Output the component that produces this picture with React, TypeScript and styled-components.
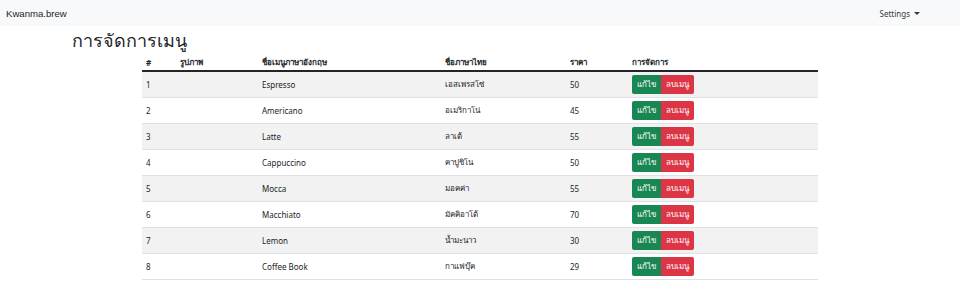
import React from 'react';
import styled, { createGlobalStyle } from 'styled-components';

type MenuItem = {
  id: number;
  nameEn: string;
  nameTh: string;
  price: number;
};

const menu: MenuItem[] = [
  { id: 1, nameEn: 'Espresso', nameTh: 'เอสเพรสโซ่', price: 50 },
  { id: 2, nameEn: 'Americano', nameTh: 'อเมริกาโน่', price: 45 },
  { id: 3, nameEn: 'Latte', nameTh: 'ลาเต้', price: 55 },
  { id: 4, nameEn: 'Cappuccino', nameTh: 'คาปูชิโน', price: 50 },
  { id: 5, nameEn: 'Mocca', nameTh: 'มอคค่า', price: 55 },
  { id: 6, nameEn: 'Macchiato', nameTh: 'มัคคิอาโต้', price: 70 },
  { id: 7, nameEn: 'Lemon', nameTh: 'น้ำมะนาว', price: 30 },
  { id: 8, nameEn: 'Coffee Book', nameTh: 'กาแฟบุ๊ค', price: 29 },
];

const GlobalStyle = createGlobalStyle`
  body {
    margin: 0;
    background: #fff;
    color: #212529;
    font-family: "Noto Sans", "Liberation Sans", sans-serif;
  }
`;

const Navbar = styled.nav`
  height: 26px;
  background: #f8f9fa;
  display: flex;
  align-items: center;
  justify-content: space-between;
  padding: 0 40px 0 6px;
`;

const Brand = styled.span`
  font-family: "Liberation Sans", sans-serif;
  font-size: 9.6px;
  color: #212529;
`;

const NavLink = styled.span`
  font-size: 8px;
  color: #343a40;
  display: flex;
  align-items: center;
  gap: 4px;

  &::after {
    content: '';
    border-top: 3px solid #343a40;
    border-left: 3px solid transparent;
    border-right: 3px solid transparent;
  }
`;

const Main = styled.main`
  padding: 0 142px 0 72px;
`;

const Title = styled.h1`
  margin: 0;
  font-size: 18px;
  font-weight: 400;
  line-height: 29px;
  color: #212529;
`;

const Table = styled.table`
  margin-left: 70px;
  width: 676px;
  table-layout: fixed;
  border-collapse: collapse;
  font-size: 8px;
`;

const Th = styled.th<{ $w: number }>`
  box-sizing: border-box;
  width: ${(p) => p.$w}px;
  text-align: left;
  font-weight: 700;
  padding: 0 4px;
  height: 16px;
  border-bottom: 2px solid #212529;
`;

const Row = styled.tr<{ $striped: boolean }>`
  height: 26px;
  background: ${(p) => (p.$striped ? '#f2f2f2' : '#fff')};
  border-bottom: 1px solid #dee2e6;
`;

const Td = styled.td`
  padding: 0 4px;
  vertical-align: middle;
  color: #212529;
`;

const BtnGroup = styled.div`
  display: flex;
`;

const Btn = styled.button<{ $variant: 'edit' | 'delete' }>`
  height: 19px;
  padding: 0;
  border: none;
  font-family: inherit;
  font-size: 8px;
  color: #fff;
  border-radius: ${(p) => (p.$variant === 'edit' ? '2px 0 0 2px' : '0 2px 2px 0')};
  background: ${(p) => (p.$variant === 'edit' ? '#198754' : '#dc3545')};
  width: ${(p) => (p.$variant === 'edit' ? 29 : 33)}px;
`;

export default function App() {
  return (
    <>
      <GlobalStyle />
      <Navbar>
        <Brand>Kwanma.brew</Brand>
        <NavLink>Settings</NavLink>
      </Navbar>
      <Main>
        <Title>การจัดการเมนู</Title>
        <Table>
          <thead>
            <tr>
              <Th $w={34}>#</Th>
              <Th $w={82}>รูปภาพ</Th>
              <Th $w={183}>ชื่อเมนูภาษาอังกฤษ</Th>
              <Th $w={125}>ชื่อภาษาไทย</Th>
              <Th $w={62}>ราคา</Th>
              <Th $w={190}>การจัดการ</Th>
            </tr>
          </thead>
          <tbody>
            {menu.map((item, i) => (
              <Row key={item.id} $striped={i % 2 === 0}>
                <Td>{item.id}</Td>
                <Td />
                <Td>{item.nameEn}</Td>
                <Td>{item.nameTh}</Td>
                <Td>{item.price}</Td>
                <Td>
                  <BtnGroup>
                    <Btn $variant="edit">แก้ไข</Btn>
                    <Btn $variant="delete">ลบเมนู</Btn>
                  </BtnGroup>
                </Td>
              </Row>
            ))}
          </tbody>
        </Table>
      </Main>
    </>
  );
}
